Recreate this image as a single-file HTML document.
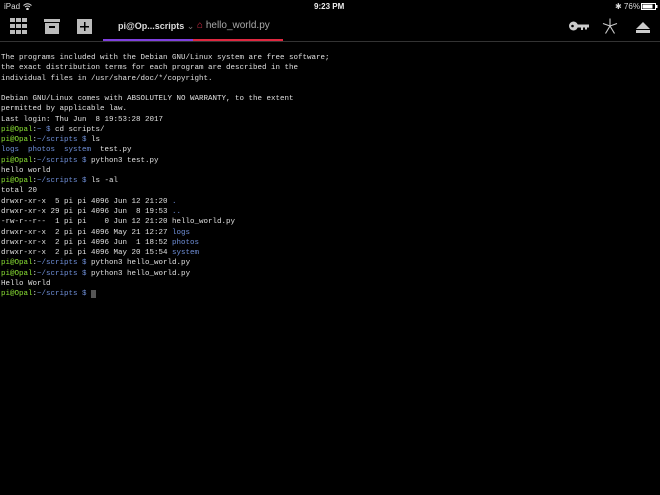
<!DOCTYPE html>
<html><head><style>
body{margin:0;width:660px;height:495px;background:#000;overflow:hidden;font-family:"Liberation Sans",sans-serif;color:#fff;position:relative}
.sb{position:absolute;top:2px;font-size:8px;color:#ddd}
pre{position:absolute;left:1px;top:53px;margin:0;font-family:"Liberation Mono","DejaVu Sans Mono",monospace;font-size:7.5px;line-height:10.27px;color:#e0e0e0}
.g{color:#8ae234}.b{color:#6f8fd8}
.hdr{position:absolute;top:41px;left:0;width:660px;height:1px;background:#333}
</style></head><body>
<div class="sb" style="left:4px">iPad</div>
<svg style="position:absolute;left:23px;top:3px" width="9" height="7" viewBox="0 0 9 7" fill="none" stroke="#ddd" stroke-width="1"><path d="M0.5 2.5 Q4.5 -1 8.5 2.5"/><path d="M2 4 Q4.5 2 7 4"/><circle cx="4.5" cy="6" r="0.8" fill="#ddd"/></svg>
<div class="sb" style="left:314px;font-weight:bold;color:#eee">9:23 PM</div>
<div class="sb" style="left:615px">✱ 76%</div>
<svg style="position:absolute;left:641px;top:3px" width="17" height="7" viewBox="0 0 17 7"><rect x="0.5" y="0.5" width="14" height="6" fill="none" stroke="#fff"/><rect x="1.5" y="1.5" width="10" height="4" fill="#fff"/><rect x="15" y="2" width="1.5" height="3" fill="#fff"/></svg>
<svg style="position:absolute;left:10px;top:18px" width="18" height="16" viewBox="0 0 18 16" fill="#bbb"><rect x="0" y="0" width="5" height="4"/><rect x="6" y="0" width="5" height="4"/><rect x="12" y="0" width="5" height="4"/><rect x="0" y="6" width="5" height="4"/><rect x="6" y="6" width="5" height="4"/><rect x="12" y="6" width="5" height="4"/><rect x="0" y="12" width="5" height="4"/><rect x="6" y="12" width="5" height="4"/><rect x="12" y="12" width="5" height="4"/></svg>
<svg style="position:absolute;left:44px;top:19px" width="16" height="15" viewBox="0 0 16 15" fill="#bbb"><rect x="0" y="0" width="16" height="3"/><rect x="1" y="4" width="14" height="11"/><rect x="5" y="7" width="6" height="2" fill="#000"/></svg>
<svg style="position:absolute;left:77px;top:19px" width="15" height="15" viewBox="0 0 15 15"><rect width="15" height="15" fill="#bbb"/><rect x="7" y="3" width="1.5" height="9" fill="#000"/><rect x="3" y="7" width="9" height="1.5" fill="#000"/></svg>
<div style="position:absolute;left:118px;top:21px;font-size:9px;font-weight:bold;color:#ddd">pi@Op...scripts <span style="color:#777;font-weight:normal">⌄</span></div>
<div style="position:absolute;left:197px;top:20px;font-size:10px;color:#aaa"><span style="color:#e0304a">⌂</span> hello_world.py</div>
<div style="position:absolute;left:103px;top:39px;width:90px;height:2px;background:#8040e0"></div>
<div style="position:absolute;left:193px;top:39px;width:90px;height:2px;background:#e02840"></div>
<div class="hdr"></div>
<svg style="position:absolute;left:569px;top:21px" width="21" height="10" viewBox="0 0 21 10" fill="#ccc"><circle cx="4.5" cy="5" r="4.5"/><rect x="7" y="3.5" width="13" height="3"/><rect x="12" y="6" width="2" height="3"/><rect x="16" y="6" width="2" height="2.5"/><circle cx="3.5" cy="5" r="1.3" fill="#000"/></svg>
<svg style="position:absolute;left:602px;top:18px" width="16" height="16" viewBox="0 0 16 16" stroke="#ccc" stroke-width="1.1"><path d="M8 0.5V8M8 8L1 5.5M8 8L15 5.5M8 8L3.5 15.5M8 8L12.5 15.5"/></svg>
<svg style="position:absolute;left:636px;top:22px" width="14" height="11" viewBox="0 0 14 11" fill="#ccc"><polygon points="7,0 14,7 0,7"/><rect x="0" y="8" width="14" height="3"/></svg>
<pre>The programs included with the Debian GNU/Linux system are free software;
the exact distribution terms for each program are described in the
individual files in /usr/share/doc/*/copyright.

Debian GNU/Linux comes with ABSOLUTELY NO WARRANTY, to the extent
permitted by applicable law.
Last login: Thu Jun  8 19:53:28 2017
<span class="g">pi@Opal</span>:<span class="b">~ $</span> cd scripts/
<span class="g">pi@Opal</span>:<span class="b">~/scripts $</span> ls
<span class="b">logs  photos  system</span>  test.py
<span class="g">pi@Opal</span>:<span class="b">~/scripts $</span> python3 test.py
hello world
<span class="g">pi@Opal</span>:<span class="b">~/scripts $</span> ls -al
total 20
drwxr-xr-x  5 pi pi 4096 Jun 12 21:20 <span class="b">.</span>
drwxr-xr-x 29 pi pi 4096 Jun  8 19:53 <span class="b">..</span>
-rw-r--r--  1 pi pi    0 Jun 12 21:20 hello_world.py
drwxr-xr-x  2 pi pi 4096 May 21 12:27 <span class="b">logs</span>
drwxr-xr-x  2 pi pi 4096 Jun  1 18:52 <span class="b">photos</span>
drwxr-xr-x  2 pi pi 4096 May 20 15:54 <span class="b">system</span>
<span class="g">pi@Opal</span>:<span class="b">~/scripts $</span> python3 hello_world.py
<span class="g">pi@Opal</span>:<span class="b">~/scripts $</span> python3 hello_world.py
Hello World
<span class="g">pi@Opal</span>:<span class="b">~/scripts $</span> <span style="background:#555"> </span></pre>
</body></html>
